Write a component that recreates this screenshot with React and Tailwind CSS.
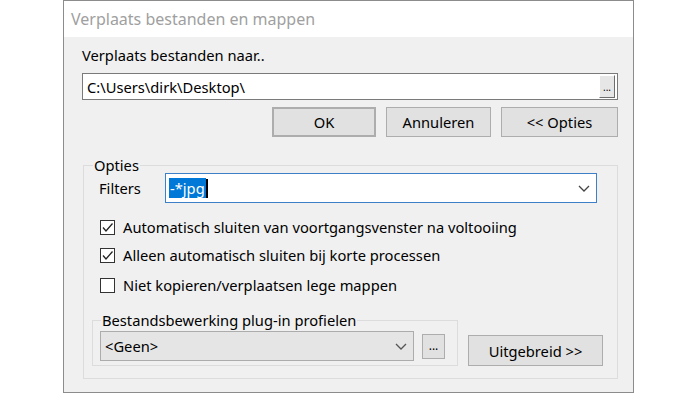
import React from "react";

const Chevron = ({ color = "#444" }) => (
    <svg width="12" height="7" viewBox="0 0 12 7" className="shrink-0">
        <polyline points="1,1 6,6 11,1" fill="none" stroke={color} strokeWidth="1.3" />
    </svg>
);

const Check = ({ checked, label }) => (
    <div className="flex items-center h-[28px] ml-[16px]">
        <div className="w-[15px] h-[15px] border border-[#333] bg-white flex items-center justify-center shrink-0">
            {checked && (
                <svg width="13" height="13" viewBox="0 0 13 13">
                    <polyline points="2,6.5 5,10 11.5,2.5" fill="none" stroke="#222" strokeWidth="1.3" />
                </svg>
            )}
        </div>
        <span className="ml-[8px]">{label}</span>
    </div>
);

const Button = ({ children, className }) => (
    <div className={"flex items-center justify-center bg-[#e1e1e1] border border-[#adadad] " + className}>
        {children}
    </div>
);

export default function App() {
    return (
        <div className="w-[700px] h-[394px] bg-white font-['Noto_Sans',sans-serif] text-[14.7px] text-black leading-[20px]">
            <div className="ml-[63px] w-[571px] h-[393px] border border-[#8c8c8c] flex flex-col">
                <div className="h-[36px] bg-white flex items-center pl-[7px] text-[16px] text-[#a0a0a0]">
                    Verplaats bestanden en mappen
                </div>
                <div className="flex-1 bg-[#f0f0f0] pl-[18px] pr-[15px] pt-[8px]">
                    <div>Verplaats bestanden naar..</div>
                    <div className="mt-[8px] h-[27px] bg-white border border-[#7a7a7a] flex items-center pl-[4px] pr-[2px]">
                        <span className="flex-1">C:\Users\dirk\Desktop\</span>
                        <div className="w-[16px] h-[23px] bg-[#e6e6e6] border-t border-l border-white border-r border-b border-r-[#6d6d6d] border-b-[#6d6d6d] flex items-center justify-center text-[10px] leading-[14px]">
                            ...
                        </div>
                    </div>
                    <div className="mt-[7px] flex justify-end gap-[10px]">
                        <Button className="w-[104px] h-[30px] border-2 border-[#0078d7]">OK</Button>
                        <Button className="w-[105px] h-[30px]">Annuleren</Button>
                        <Button className="w-[117px] h-[30px]">&lt;&lt; Opties</Button>
                    </div>

                    <fieldset className="mt-[20px] ml-[1px] border border-[#dcdcdc] pb-[12px]">
                        <legend className="ml-[9px] px-[1px] leading-[16px]">Opties</legend>
                        <div className="flex items-center">
                            <span className="ml-[15px] w-[66px]">Filters</span>
                            <div className="w-[432px] h-[30px] bg-white border border-[#3d7fc9] flex items-center pl-[3px] pr-[6px]">
                                <span className="bg-[#0078d7] text-white px-[1px]">-*jpg</span>
                                <span className="w-[2px] h-[19px] bg-black"></span>
                                <span className="flex-1"></span>
                                <Chevron />
                            </div>
                        </div>
                        <div className="mt-[10px] flex flex-col">
                            <Check checked label="Automatisch sluiten van voortgangsvenster na voltooiing" />
                            <Check checked label="Alleen automatisch sluiten bij korte processen" />
                            <div className="mt-[2px]">
                                <Check label="Niet kopieren/verplaatsen lege mappen" />
                            </div>
                        </div>
                        <div className="mt-[13px] flex items-end">
                            <fieldset className="ml-[8px] w-[366px] border border-[#dcdcdc] pl-[7px] pb-[4px]">
                                <legend className="ml-[1px] px-[1px] leading-[16px]">Bestandsbewerking plug-in profielen</legend>
                                <div className="mt-[3px] flex items-center">
                                    <div className="w-[314px] h-[30px] bg-[#e5e5e5] border border-[#acacac] flex items-center pl-[4px] pr-[6px]">
                                        <span className="flex-1">&lt;Geen&gt;</span>
                                        <Chevron color="#555" />
                                    </div>
                                    <Button className="ml-[8px] w-[23px] h-[25px] text-[12px] leading-[12px]">...</Button>
                                </div>
                            </fieldset>
                            <Button className="ml-[10px] w-[135px] h-[31px]">Uitgebreid &gt;&gt;</Button>
                        </div>
                    </fieldset>
                </div>
            </div>
        </div>
    );
}
